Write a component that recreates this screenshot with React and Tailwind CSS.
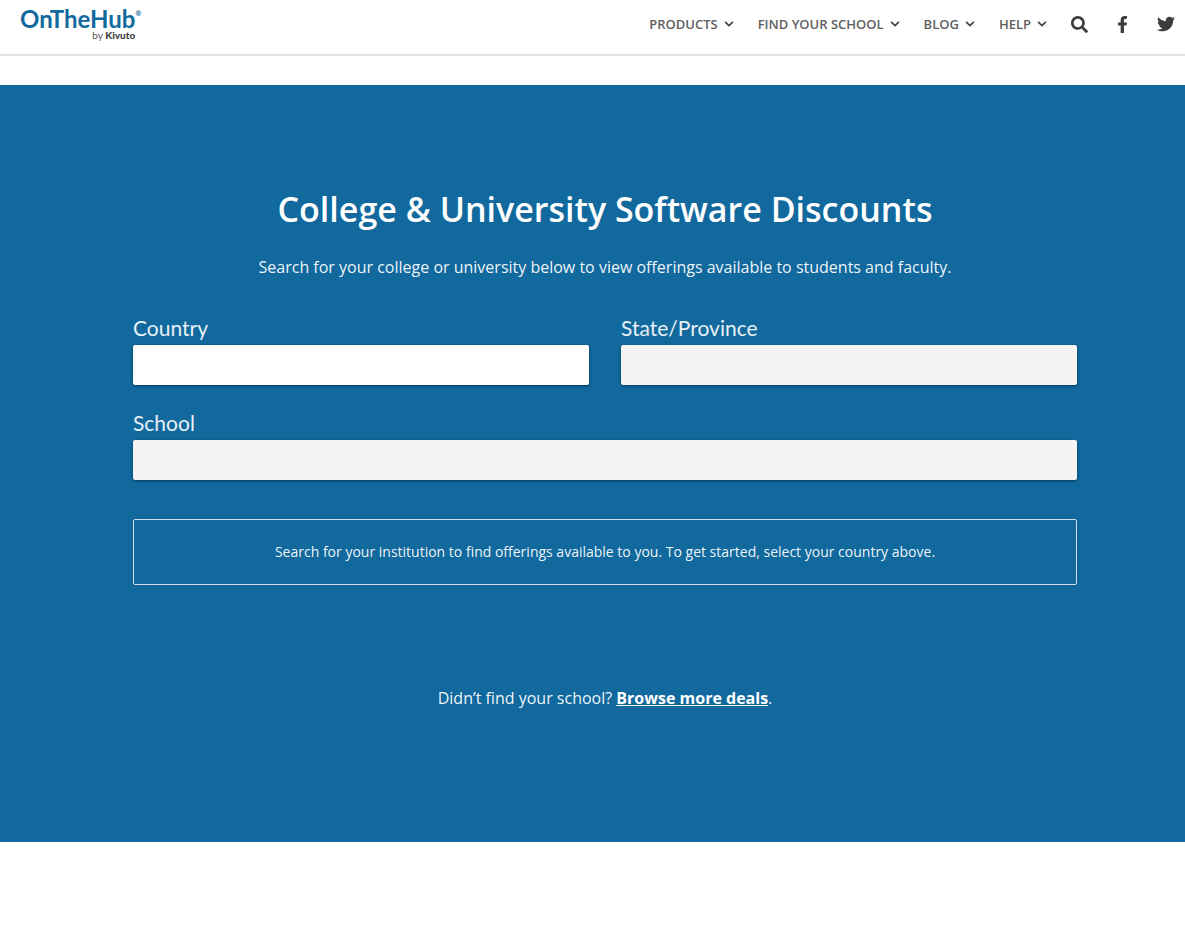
import { FaChevronDown, FaFacebookF, FaSearch, FaTwitter } from "react-icons/fa";

const menu = ["PRODUCTS", "FIND YOUR SCHOOL", "BLOG", "HELP"];

function Logo() {
  return (
    <a href="#home" aria-label="OnTheHub by Kivuto" className="flex flex-col items-end font-['Lato',sans-serif]">
      <span className="flex items-start text-2xl leading-6 font-bold text-[#11699e]">
        OnTheHub
        <span className="text-[7px] leading-3">®</span>
      </span>
      <span className="pr-1.5 text-[10px] leading-2 text-[#555555]">
        by <b className="font-black text-[#404040]">Kivuto</b>
      </span>
    </a>
  );
}

function Header() {
  return (
    <header className="flex h-14 items-start justify-between border-b-2 border-[#e2e2e2] pr-2.5 pl-5">
      <div className="pt-[7px]">
        <Logo />
      </div>
      <nav className="flex h-12 items-center text-[#3d3d3d]">
        <ul className="flex gap-6">
          {menu.map((item) => (
            <li key={item}>
              <button
                type="button"
                className="flex items-center gap-1.5 font-['Open_Sans',sans-serif] text-[13px] leading-5 font-semibold text-[#606060]"
              >
                {item}
                <FaChevronDown className="size-2.5 text-[#3d3d3d]" />
              </button>
            </li>
          ))}
        </ul>
        <button type="button" aria-label="Search" className="ml-6">
          <FaSearch className="size-[17px]" />
        </button>
        <a href="#facebook" aria-label="Facebook" className="ml-[26px]">
          <FaFacebookF className="size-[17px]" />
        </a>
        <a href="#twitter" aria-label="Twitter" className="ml-[26px]">
          <FaTwitter className="size-[18px]" />
        </a>
      </nav>
    </header>
  );
}

function Field({ id, label, disabled = false }) {
  return (
    <div>
      <label htmlFor={id} className="block pb-0.5 font-['Lato',sans-serif] text-[21px] leading-[30px] text-white/90">
        {label}
      </label>
      <input
        id={id}
        type="text"
        disabled={disabled}
        className="block h-10 w-full rounded-xs bg-white px-3 text-base text-[#333333] shadow-[0_1px_3px_rgba(0,0,0,0.5)] disabled:bg-[#f4f4f4]"
      />
    </div>
  );
}

export default function App() {
  return (
    <div className="min-h-screen bg-white">
      <Header />
      <main className="mt-[29px] bg-[#11699e] pt-24 pr-[108px] pb-[130px] pl-[133px] font-['Open_Sans',sans-serif] text-white">
        <h1 className="text-center text-[34px] leading-14 font-semibold">
          College &amp; University Software Discounts
        </h1>
        <p className="mt-4 text-center text-base leading-7 text-white/95">
          Search for your college or university below to view offerings available to students and faculty.
        </p>
        <form className="mt-8">
          <div className="grid grid-cols-2 gap-8">
            <Field id="country" label="Country" />
            <Field id="state" label="State/Province" disabled />
          </div>
          <div className="mt-[23px]">
            <Field id="school" label="School" disabled />
          </div>
        </form>
        <div className="mt-[39px] rounded-xs border border-white/80 px-4 py-5 text-center text-sm leading-6 text-white/95 shadow-sm">
          Search for your institution to find offerings available to you. To get started, select your country above.
        </div>
        <p className="mt-[99px] text-center text-base leading-7 text-white/95">
          Didn’t find your school?{" "}
          <a href="#deals" className="font-bold text-white underline">
            Browse more deals
          </a>
          .
        </p>
      </main>
    </div>
  );
}
